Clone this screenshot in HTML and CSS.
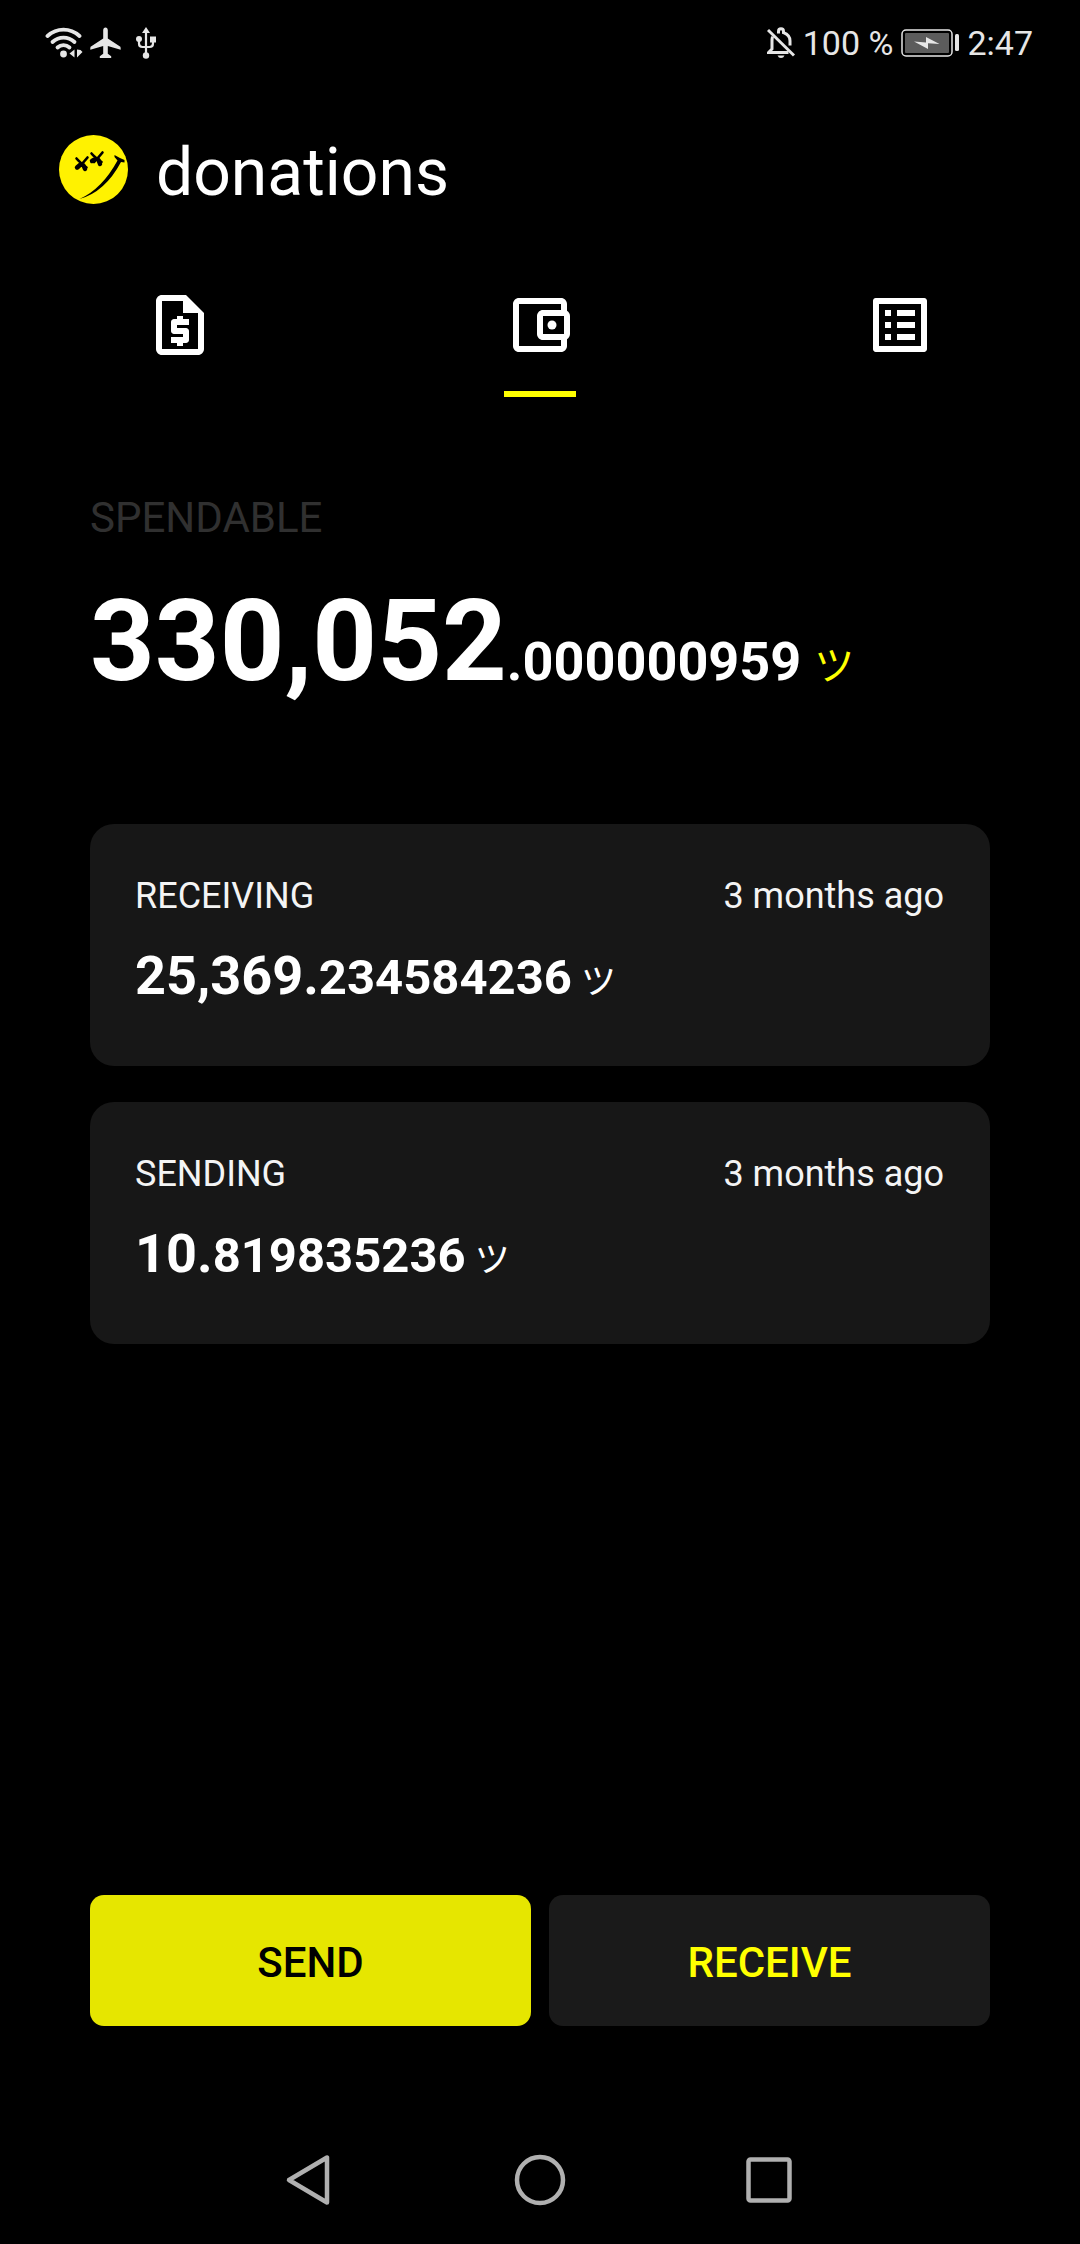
FILE: index.html
```html
<!DOCTYPE html>
<html lang="en">
<head>
<meta charset="utf-8">
<meta name="viewport" content="width=device-width, initial-scale=1">
<title>donations</title>
<link rel="stylesheet" href="styles.css">
</head>
<body>
<div class="status-bar">
  <div class="status-group status-left">
    <svg class="icon-wifi" viewBox="0 0 38 32" aria-hidden="true">
      <g fill="none" stroke="currentColor" stroke-width="3.8" stroke-linecap="round">
        <path d="M2.500 9C12 .6 25 .6 34.500 9"/>
        <path d="M7.500 15C14 9.200 23 9.200 29.500 15"/>
        <path d="M12.500 20.500C16 17.200 21 17.200 24.500 20.500"/>
      </g>
      <circle cx="18.500" cy="27" r="3.400" fill="currentColor"/>
      <path d="M24.500 26.500L29.500 22.500v8zM32 22.500v8l5.500-5.500-2-2z" fill="currentColor"/>
    </svg>
    <svg class="icon-plane" viewBox="0 0 31 32" aria-hidden="true">
      <path fill="currentColor" d="M15.500.5c1.400 0 2.300 1.200 2.300 2.800v8.200L30 19.500c.6.400.7.900.7 3.200L17.800 19v7.800l3.400 2.400V31H9.800v-1.800l3.400-2.400V19L.3 22.700c0-2.300.1-2.800.7-3.200l12.200-8V3.300c0-1.600.9-2.800 2.300-2.800z"/>
    </svg>
    <svg class="icon-usb" viewBox="0 0 22 32" aria-hidden="true">
      <path fill="none" stroke="currentColor" stroke-width="2.200" d="M11 4v25M4 12v4.500q0 3.500 3.500 3.500h7q3.500 0 3.500-3.500V12"/>
      <path fill="currentColor" d="M11 0l4 6H7zM15 9.500h6v6h-6z"/>
      <circle cx="4" cy="12" r="3" fill="currentColor"/>
      <circle cx="11" cy="28.500" r="3.200" fill="currentColor"/>
    </svg>
  </div>
  <div class="status-group status-right">
    <svg class="icon-bell" viewBox="0 0 28 32" aria-hidden="true">
      <g fill="none" stroke="currentColor" stroke-width="3">
        <path d="M11.500 6.500V4.500q0-2.700 2.500-2.700t2.500 2.700v1.200Q23 8 23 14v4.500"/>
        <path d="M5.500 9.500Q5 11.500 5 14v8l-3.500 3.500H21.500"/>
        <path d="M1 3L27 28.500"/>
      </g>
      <path fill="currentColor" d="M10.500 28.500h7q-1 2.500-3.500 2.500t-3.500-2.500z"/>
    </svg>
    <span class="status-battery-text">100 %</span>
    <svg class="icon-battery" viewBox="0 0 58 28" aria-hidden="true">
      <rect x="1" y="1" width="50" height="26" rx="4" fill="none" stroke="currentColor" stroke-width="1.500"/>
      <rect x="4" y="4" width="44" height="20" rx="1" fill="#5c5c5c"/>
      <rect x="54" y="5" width="4" height="17" rx="1.500" fill="currentColor"/>
      <path fill="currentColor" d="M13 12.500l12 1V8l13.500 7-11.500-.8V20z"/>
    </svg>
    <time class="status-time">2:47</time>
  </div>
</div>

<header class="app-header">
  <svg class="logo" viewBox="0 0 69 69" aria-hidden="true">
    <circle cx="34.500" cy="34.500" r="34.500" fill="#fff200"/>
    <path fill="none" stroke="#000" stroke-width="2.600" stroke-linecap="round" d="M17.500 23.500q3 3.500 10 9M28.500 22.500q-4 5-9.500 10.500M32.500 18.500q3 3.500 10 8.500M43.500 17.500q-4 5-8.500 9.500"/>
    <path fill="none" stroke="#000" stroke-width="4.400" stroke-linecap="round" d="M21.500 29.500l-3.500 3M24.500 30.500l1.500 3.500M35.500 24.500l-2.500 1.500M39.500 25l1.500 4"/>
    <path d="M20.500 64Q43 54 58.500 25.500L55.500 22V20q5 3 10 5v2.500l-3.500-.5Q46 57 20.500 64z"/>
  </svg>
  <h1 class="title">donations</h1>
</header>

<nav class="tabs" aria-label="Sections">
  <button class="tab" type="button" aria-label="Request">
    <svg class="tab-icon" viewBox="0 0 24 24" aria-hidden="true"><path fill="currentColor" fill-rule="evenodd" d="M14 2H6c-1.100 0-2 .9-2 2v16c0 1.100.9 2 2 2h12c1.100 0 2-.9 2-2V8zM6 20V4h7v4h5v12zM11 19h2v-1h1c.55 0 1-.45 1-1v-3c0-.55-.45-1-1-1h-3v-1h4v-2h-2V9h-2v1h-1c-.55 0-1 .45-1 1v3c0 .55.45 1 1 1h3v1H9v2h2z"/></svg>
  </button>
  <button class="tab tab-active" type="button" aria-label="Wallet" aria-current="page">
    <svg class="tab-icon" viewBox="0 0 24 24" aria-hidden="true"><path fill="currentColor" d="M21 7.280V5c0-1.100-.9-2-2-2H5c-1.110 0-2 .9-2 2v14c0 1.100.89 2 2 2h14c1.100 0 2-.9 2-2v-2.280c.59-.35 1-.98 1-1.720V9c0-.74-.41-1.380-1-1.720zM20 9v6h-7V9h7zM5 19V5h14v2h-6c-1.100 0-2 .9-2 2v6c0 1.100.9 2 2 2h6v2H5z"/><circle cx="16" cy="12" r="1.500" fill="currentColor"/></svg>
  </button>
  <button class="tab" type="button" aria-label="History">
    <svg class="tab-icon" viewBox="0 0 24 24" aria-hidden="true"><path fill="currentColor" d="M19 5v14H5V5h14m1.100-2H3.900c-.5 0-.9.4-.9.9v16.200c0 .4.4.9.9.9h16.200c.4 0 .9-.5.9-.9V3.900c0-.5-.5-.9-.9-.9zM11 7h6v2h-6zM11 11h6v2h-6zM11 15h6v2h-6zM7 7h2v2H7zM7 11h2v2H7zM7 15h2v2H7z"/></svg>
  </button>
</nav>

<main class="content">
  <h2 class="label">SPENDABLE</h2>
  <p class="balance">330,052<span class="balance-fraction">.000000959</span> <span class="unit">ツ</span></p>
  <section class="cards">
    <article class="card">
      <div class="card-head"><span>RECEIVING</span><span>3 months ago</span></div>
      <p class="amount">25,369.<span class="amount-fraction">234584236</span> <span class="amount-unit">ツ</span></p>
    </article>
    <article class="card">
      <div class="card-head"><span>SENDING</span><span>3 months ago</span></div>
      <p class="amount">10.<span class="amount-fraction">819835236</span> <span class="amount-unit">ツ</span></p>
    </article>
  </section>
  <div class="actions">
    <button class="action action-send" type="button">SEND</button>
    <button class="action action-receive" type="button">RECEIVE</button>
  </div>
</main>

<footer class="system-nav">
  <button class="system-button" type="button" aria-label="Back">
    <svg class="system-icon" viewBox="0 0 54 54" aria-hidden="true"><path d="M6 27L44 4.500V49.500z"/></svg>
  </button>
  <button class="system-button" type="button" aria-label="Home">
    <svg class="system-icon" viewBox="0 0 54 54" aria-hidden="true"><circle cx="27" cy="27" r="23"/></svg>
  </button>
  <button class="system-button" type="button" aria-label="Recent apps">
    <svg class="system-icon" viewBox="0 0 54 54" aria-hidden="true"><rect x="5.500" y="6.500" width="41" height="41" rx="2"/></svg>
  </button>
</footer>
</body>
</html>
```
FILE: styles.css
```css
* {
  box-sizing: border-box;
}

body {
  margin: 0;
  min-height: 100vh;
  display: flex;
  flex-direction: column;
  background: #000;
  color: #fff;
  font-family: Roboto, "Noto Sans CJK JP", sans-serif;
}

h1,
h2,
p {
  margin: 0;
  font-weight: 400;
}

button {
  margin: 0;
  padding: 0;
  border: 0;
  background: none;
  color: inherit;
  font-family: inherit;
}

svg {
  display: block;
  flex: none;
}

.status-bar {
  height: 86px;
  padding: 0 47px 0 45px;
  display: flex;
  justify-content: space-between;
  align-items: center;
  color: #e6e6e6;
  font-size: 34px;
  line-height: 40px;
}

.status-group {
  display: flex;
  align-items: center;
}

.status-left {
  gap: 7px;
}

.status-right {
  gap: 8px;
}

.icon-wifi {
  width: 38px;
  height: 32px;
}

.icon-plane {
  width: 31px;
  height: 32px;
}

.icon-usb {
  width: 22px;
  height: 32px;
  margin-left: 7px;
}

.icon-bell {
  width: 28px;
  height: 32px;
}

.icon-battery {
  width: 58px;
  height: 28px;
}

.app-header {
  height: 167px;
  padding: 0 59px;
  display: flex;
  align-items: center;
  gap: 28px;
}

.logo {
  width: 69px;
  height: 69px;
}

.title {
  padding-top: 6px;
  font-size: 66px;
  line-height: 80px;
}

.tabs {
  display: grid;
  grid-template-columns: repeat(3, 1fr);
}

.tab {
  height: 144px;
  display: flex;
  flex-direction: column;
  align-items: center;
  padding-top: 36px;
}

.tab-icon {
  width: 72px;
  height: 72px;
}

.tab-active::after {
  content: "";
  width: 72px;
  height: 6px;
  margin-top: 30px;
  background: #ff0;
}

.content {
  flex: 1;
  display: flex;
  flex-direction: column;
  padding: 97px 90px 90px;
}

.label {
  color: #303030;
  font-size: 42px;
  line-height: 48px;
}

.balance {
  margin-top: 40px;
  font-size: 113px;
  line-height: 120px;
  font-weight: 700;
}

.balance-fraction {
  font-size: 54px;
  line-height: 60px;
}

.balance,
.amount {
  display: flex;
  align-items: baseline;
}

.unit,
.amount-unit {
  font-weight: 400;
  line-height: 48px;
}

.unit {
  margin-left: 13px;
  color: #ff0;
  font-size: 40px;
}

.cards {
  margin-top: 122px;
  display: flex;
  flex-direction: column;
  gap: 36px;
}

.card {
  padding: 51px 46px 59px 45px;
  border-radius: 24px;
  background: #171717;
}

.card-head {
  display: flex;
  justify-content: space-between;
  color: #f4f4f4;
  font-size: 36px;
  line-height: 42px;
}

.amount {
  margin-top: 29px;
  font-size: 54px;
  line-height: 60px;
  font-weight: 700;
}

.amount-fraction {
  font-size: 49px;
  line-height: 54px;
}

.amount-unit {
  margin-left: 9px;
  font-size: 35px;
}

.actions {
  margin-top: auto;
  display: grid;
  grid-template-columns: 1fr 1fr;
  gap: 18px;
}

.action {
  height: 131px;
  padding-top: 5px;
  border-radius: 14px;
  font-size: 42px;
  line-height: 48px;
  font-weight: 500;
}

.action-send {
  background: #e6e600;
  color: #000;
}

.action-receive {
  background: #1a1a1a;
  color: #ff0;
}

.system-nav {
  height: 128px;
  display: flex;
  justify-content: center;
  align-items: center;
  gap: 158px;
}

.system-button {
  width: 72px;
  height: 72px;
  display: flex;
  justify-content: center;
  align-items: center;
}

.system-icon {
  width: 54px;
  height: 54px;
  fill: none;
  stroke: #b0b0b0;
  stroke-width: 4.5;
  stroke-linejoin: round;
}
```
